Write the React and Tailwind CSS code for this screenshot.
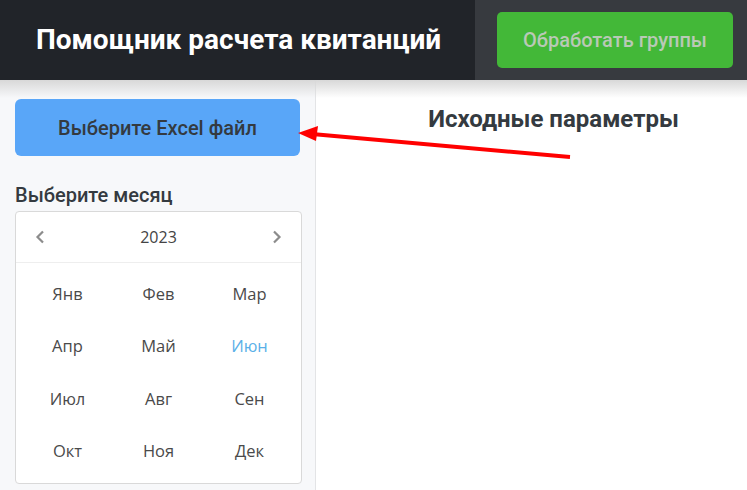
import React from "react";

const months = [
  ["Янв", "Фев", "Мар"],
  ["Апр", "Май", "Июн"],
  ["Июл", "Авг", "Сен"],
  ["Окт", "Ноя", "Дек"],
];

export default function App() {
  return (
    <div className="relative w-[747px] h-[490px] overflow-hidden bg-white" style={{ fontFamily: "Roboto, 'Noto Sans', sans-serif" }}>
      <header className="flex h-[80px] bg-[#212429]">
        <div className="flex w-[475px] items-center pl-[36px]">
          <h1 className="text-[28px] font-bold text-white">Помощник расчета квитанций</h1>
        </div>
        <div className="flex flex-1 items-center bg-[#373a3f] pl-[22px]">
          <button className="h-[56px] w-[236px] rounded-[5px] bg-[#43b838] text-[20px] font-medium text-[#b9c9b6]">
            Обработать группы
          </button>
        </div>
      </header>
      <div className="relative flex h-[410px]">
        <div className="pointer-events-none absolute left-0 right-0 top-0 h-[18px] bg-gradient-to-b from-[#d8d8d8] to-transparent" />
        <aside className="w-[316px] border-r border-[#e3e4e6] bg-[#f7f8fa] px-[15px] pt-[19px]">
          <button className="h-[57px] w-[285px] rounded-[6px] bg-[#59a6f8] text-[20px] font-medium text-[#343a40]">
            Выберите Excel файл
          </button>
          <div className="mt-[27px] text-[20px] font-medium text-[#343a40] leading-[24px]">Выберите месяц</div>
          <div className="mt-[4px] w-[287px] rounded-[4px] border border-[#d9d9d9] bg-white" style={{ fontFamily: "'Open Sans', sans-serif" }}>
            <div className="flex h-[51px] items-center justify-between border-b border-[#eeeeee] px-[18px]">
              <svg width="12" height="14" viewBox="0 0 12 14"><path d="M9 1.5 L3.5 7 L9 12.5" fill="none" stroke="#8c8c8c" strokeWidth="2.2" /></svg>
              <span className="text-[16px] text-[#444]">2023</span>
              <svg width="12" height="14" viewBox="0 0 12 14"><path d="M3 1.5 L8.5 7 L3 12.5" fill="none" stroke="#8c8c8c" strokeWidth="2.2" /></svg>
            </div>
            <div className="grid grid-cols-3 px-[6px] pt-[5px] pb-[5px]">
              {months.flat().map((m) => (
                <div key={m} className={`flex h-[52.5px] items-center justify-center text-[16.5px] ${m === "Июн" ? "text-[#5ab0e8]" : "text-[#4a4a4a]"}`}>
                  {m}
                </div>
              ))}
            </div>
          </div>
        </aside>
        <main className="flex-1 pl-[44px] pt-[21px]">
          <h2 className="text-center text-[24px] font-bold text-[#343a40]">Исходные параметры</h2>
        </main>
      </div>
      <svg className="pointer-events-none absolute left-0 top-0" width="747" height="490">
        <line x1="570" y1="157" x2="312" y2="134" stroke="#ff0000" strokeWidth="4" />
        <polygon points="298,133 318,126 316,141" fill="#ff0000" />
      </svg>
    </div>
  );
}
